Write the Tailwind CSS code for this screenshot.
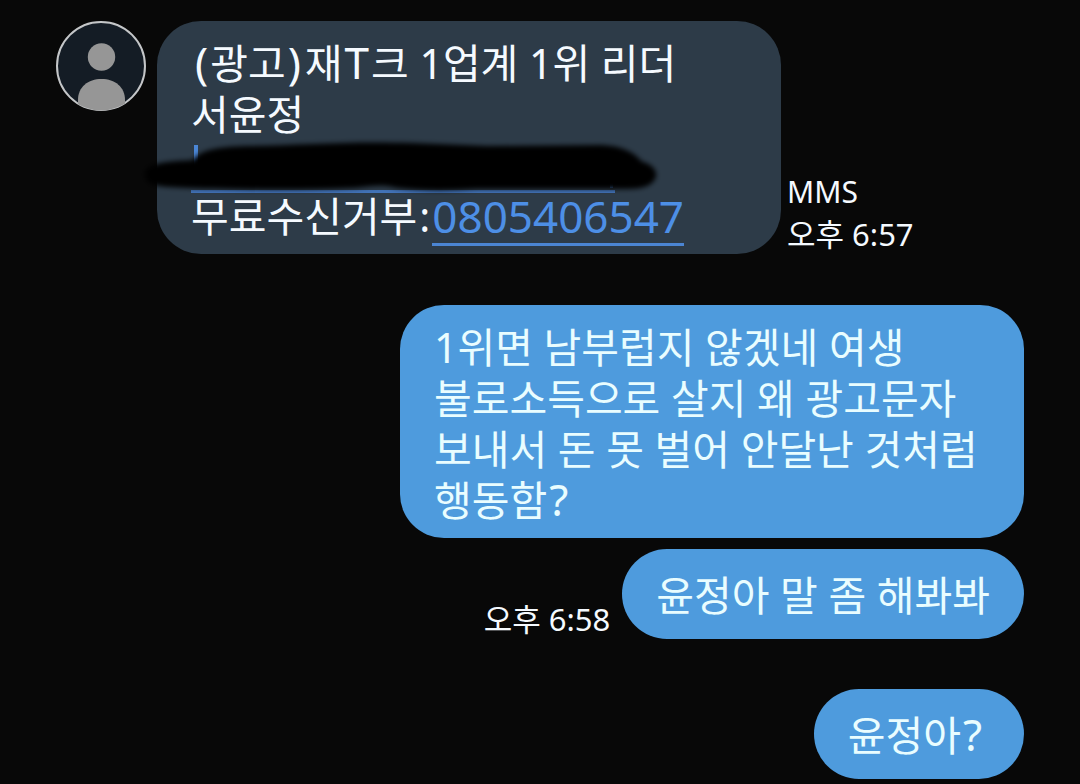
<!DOCTYPE html>
<html lang="ko">
<head>
<meta charset="utf-8">
<meta name="viewport" content="width=device-width, initial-scale=1">
<title>메시지</title>
<script src="https://cdn.jsdelivr.net/npm/@tailwindcss/browser@4"></script>
</head>
<body class="bg-[#080808] font-['Noto_Sans','Noto_Sans_CJK_KR',sans-serif] text-[41px] leading-[51px] text-[#f5faff]">
<main class="flex min-h-screen flex-col pr-14 pl-14 pt-[21px] pb-1">

  <article class="flex items-start">
    <svg class="mr-[11px] size-[90px] shrink-0" viewBox="0 0 90 90" role="img" aria-label="프로필">
      <defs><clipPath id="face"><circle cx="45" cy="45" r="44.5"/></clipPath></defs>
      <circle cx="45" cy="45" r="44" fill="#141c25" stroke="#c4c6c8" stroke-width="2"/>
      <g clip-path="url(#face)" fill="#969696">
        <circle cx="45.500" cy="36" r="13.700"/>
        <path d="M22 90V79C22 66 32 58 45.500 58S69 66 69 79V90Z"/>
      </g>
    </svg>
    <div class="relative w-[624px] rounded-[44px] bg-[#2d3b48] pt-[17px] pr-[34px] pb-3 pl-[34px]">
      <p class="whitespace-nowrap"><span class="mr-0.5 ml-1 text-[44px] leading-none">(</span>광고<span class="mr-1 ml-0.5 text-[44px] leading-none">)</span>재<span class="mr-0.5 ml-0.5 text-[44px] leading-none">T</span>크 1업계 1위 리더</p>
      <p>서윤정</p>
      <a href="#" aria-label="링크" class="-mb-0.5 block h-[53px] w-[424px] border-b-3 border-[#4273b8]">
        <svg class="block h-12 w-full" viewBox="0 0 424 48" aria-hidden="true"><path d="M3 5h4v35H3zM419 40h3v8h-3z" fill="#4a86d6"/></svg>
      </a>
      <p class="flex h-[51px] items-start whitespace-nowrap"><span>무료수신거부<span class="mr-0.5 ml-0.5">:</span></span><a href="tel:0805406547" class="h-[55px] border-b-3 border-[#4b85d3] text-[44px] text-[#4d8fe6]">0805406547</a></p>
      <svg class="pointer-events-none absolute -left-5 top-[110px] h-[74px] w-[540px]" viewBox="0 0 540 74" aria-hidden="true">
        <defs><filter id="soft" x="-5%" y="-20%" width="110%" height="140%"><feGaussianBlur stdDeviation="2.500"/></filter></defs>
        <path filter="url(#soft)" d="M8 44C8 34 18 31 56 29C64 19 78 16 110 15C170 14 210 10 275 12L350 15L465 14C486 15 498 22 504 30C516 34 520 39 519 46C516 55 505 58 490 58L340 58C310 60 285 60 260 57C245 53 235 55 218 57C150 60 90 58 52 57C20 56 9 55 8 44Z" fill="#000"/>
      </svg>
    </div>
    <div class="ml-1.5 self-end text-[30px] leading-[42px] whitespace-nowrap">
      <p class="-mb-px pt-0.5">MMS</p>
      <time class="-mb-px block pt-px text-[31px]">오후 6:57</time>
    </div>
  </article>

  <article class="mt-[51px] flex justify-end">
    <p class="w-[624px] rounded-[44px] bg-[#4e9bdd] pt-[17px] pr-[34px] pb-3 pl-[34px] whitespace-nowrap text-[#e9fdff]">1위면 남부럽지 않겠네 여생<br>불로소득으로 살지 왜 광고문자<br>보내서 돈 못 벌어 안달난 것처럼<br>행동함<span class="ml-0.5 text-[44px] leading-none">?</span></p>
  </article>

  <article class="mt-[11px] flex items-end justify-end">
    <time class="mr-3 text-[31px] leading-10">오후 6:58</time>
    <p class="rounded-full bg-[#4e9bdd] pt-[21px] pr-[34px] pb-[18px] pl-[34px] text-[#e9fdff]">윤정아 말 좀 해봐봐</p>
  </article>

  <article class="mt-[50px] flex justify-end">
    <p class="rounded-full bg-[#4e9bdd] pt-[21px] pr-[42px] pb-[18px] pl-[34px] text-[#e9fdff]">윤정아<span class="ml-0.5 text-[44px] leading-none">?</span></p>
  </article>
</main>
</body>
</html>
